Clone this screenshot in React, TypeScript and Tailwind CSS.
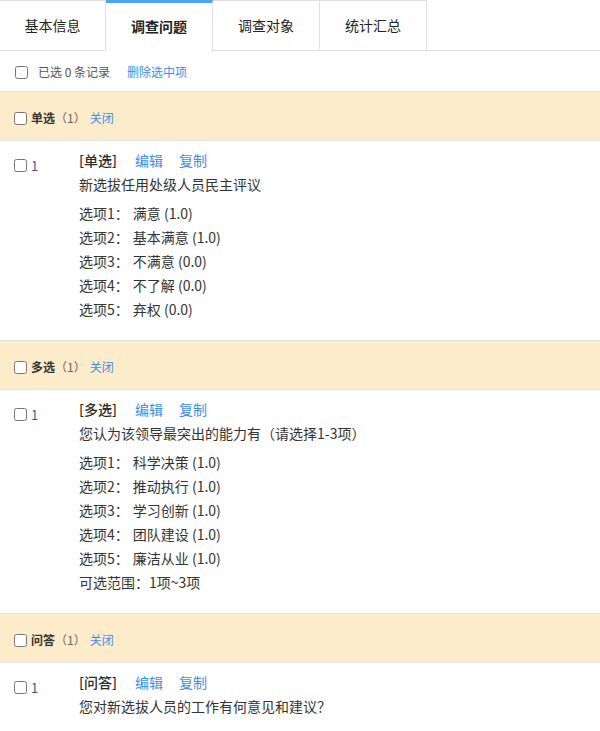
import React from "react";

type Question = {
	type: string;
	title: string;
	options: { label: string; score: string }[];
	range?: string;
};

type Group = { name: string; questions: Question[] };

const groups: Group[] = [
	{
		name: "单选",
		questions: [
			{
				type: "单选",
				title: "新选拔任用处级人员民主评议",
				options: [
					{ label: "满意", score: "1.0" },
					{ label: "基本满意", score: "1.0" },
					{ label: "不满意", score: "0.0" },
					{ label: "不了解", score: "0.0" },
					{ label: "弃权", score: "0.0" },
				],
			},
		],
	},
	{
		name: "多选",
		questions: [
			{
				type: "多选",
				title: "您认为该领导最突出的能力有（请选择1-3项）",
				options: [
					{ label: "科学决策", score: "1.0" },
					{ label: "推动执行", score: "1.0" },
					{ label: "学习创新", score: "1.0" },
					{ label: "团队建设", score: "1.0" },
					{ label: "廉洁从业", score: "1.0" },
				],
				range: "1项~3项",
			},
		],
	},
	{
		name: "问答",
		questions: [
			{
				type: "问答",
				title: "您对新选拔人员的工作有何意见和建议？",
				options: [],
			},
		],
	},
];

const tabs = ["基本信息", "调查问题", "调查对象", "统计汇总"];

const Checkbox: React.FC = () => (
	<input type="checkbox" className="m-0 h-[13px] w-[13px] shrink-0" />
);

const QuestionRow: React.FC<{ q: Question; index: number }> = ({ q, index }) => (
	<div className="flex pt-[7px] pb-[19px]">
		<div className="flex h-[24px] w-[79px] shrink-0 items-center self-start pl-[14px] pt-[10px]">
			<Checkbox />
			<span className="ml-[4px] text-[13px] leading-none text-[#5b4a92]">{index}</span>
		</div>
		<div className="text-[14px] leading-[24px] text-[#333]">
			<div className="flex">
				<span className="font-medium text-[#2a2a2a]">[{q.type}]</span>
				<a className="ml-[18px] text-[#3a8ef0]">编辑</a>
				<a className="ml-[16px] text-[#3a8ef0]">复制</a>
			</div>
			<div>{q.title}</div>
			{q.options.length > 0 && (
				<div className="mt-[5px]">
					{q.options.map((o, i) => (
						<div key={i} className="flex">
							<span>选项{i + 1}：</span>
							<span className="ml-[4px]">
								{o.label} ({o.score})
							</span>
						</div>
					))}
					{q.range && <div>可选范围：{q.range}</div>}
				</div>
			)}
		</div>
	</div>
);

const App: React.FC = () => {
	return (
		<div className="min-h-[731px] w-[600px] bg-white font-['Noto_Sans_CJK_SC',sans-serif] text-[#333]">
			{/* tabs */}
			<div className="flex items-start border-b border-[#e0e0e0]">
				{tabs.map((t, i) =>
					i === 1 ? (
						<div
							key={t}
							className="-mb-px flex h-[51px] w-[107px] items-center justify-center border-r border-t-[3px] border-r-[#e0e0e0] border-t-[#4aa3ff] bg-white pb-[2px] text-[14px] font-bold text-[#222]"
						>
							{t}
						</div>
					) : (
						<div
							key={t}
							className={`flex h-[50px] items-center justify-center border-r border-t border-[#e0e0e0] text-[14px] text-[#222] ${i === 0 ? "w-[106px]" : "w-[107px]"}`}
						>
							{t}
						</div>
					)
				)}
			</div>

			{/* toolbar */}
			<div className="flex h-[41px] items-center border-b border-[#e4e4e4] pl-[15px] pt-[2px] text-[12px]">
				<Checkbox />
				<span className="ml-[10px] text-[#555]">已选 0 条记录</span>
				<a className="ml-[17px] text-[#3a8ef0]">删除选中项</a>
			</div>

			{groups.map((g, gi) => (
				<div key={g.name} className={gi > 0 ? "border-t border-[#e4e4e4]" : ""}>
					<div className="flex h-[49px] items-center border-b border-[#e4e4e4] bg-[#fdecc9] pl-[14px] pt-[4px] text-[12px]">
						<Checkbox />
						<span className="ml-[4px] font-bold text-[#333]">{g.name}</span>
						<span className="text-[#666]">（1）</span>
						<a className="ml-[4px] text-[#3a8ef0]">关闭</a>
					</div>
					{g.questions.map((q, qi) => (
						<QuestionRow key={qi} q={q} index={qi + 1} />
					))}
				</div>
			))}
		</div>
	);
};

export default App;
